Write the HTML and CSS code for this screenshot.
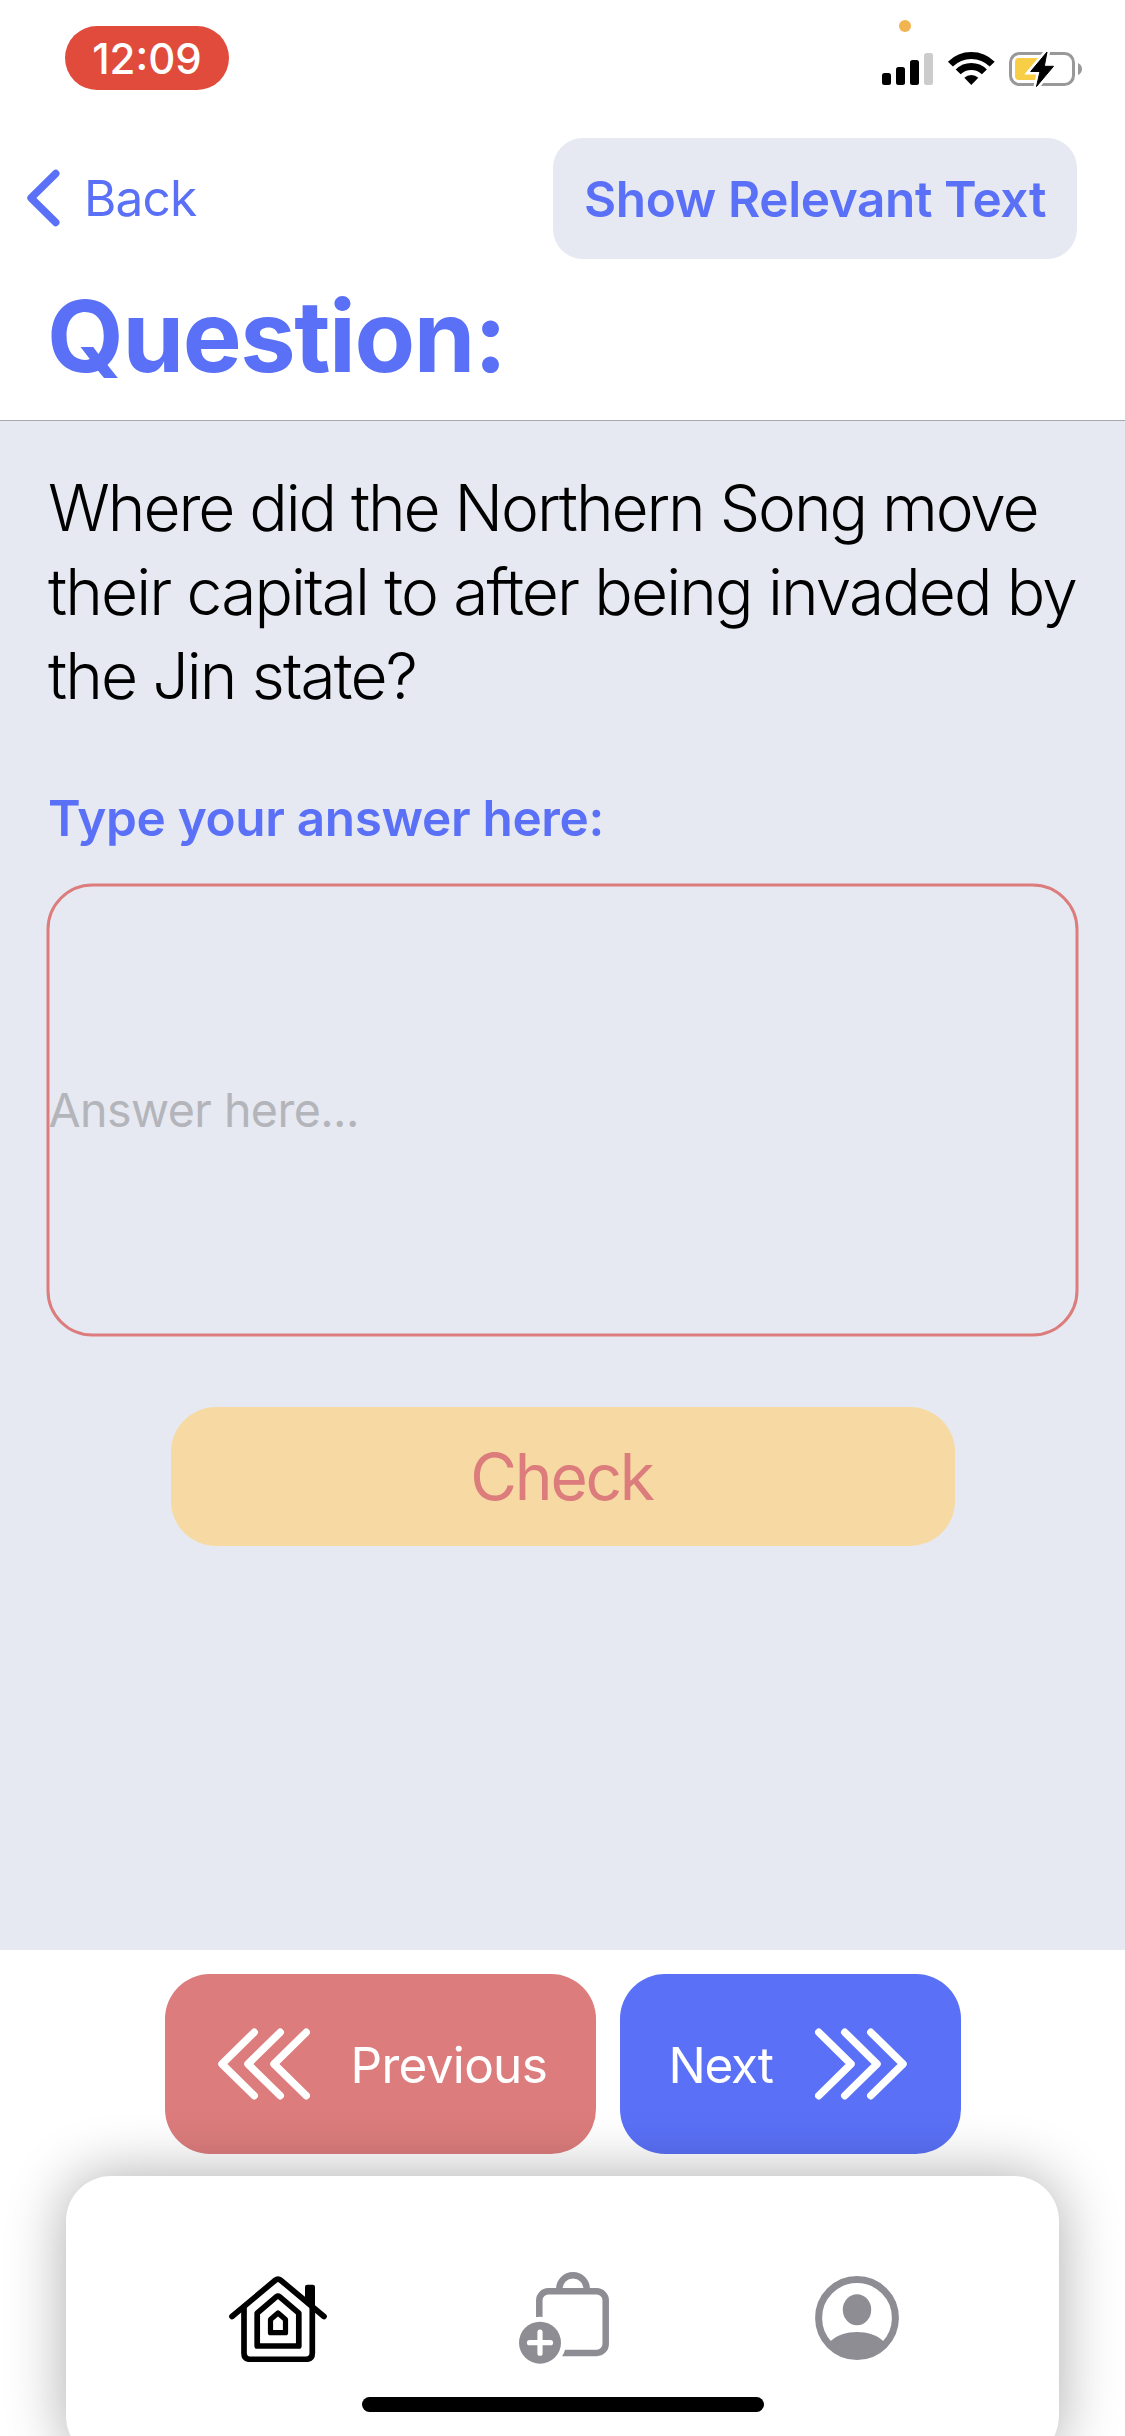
FILE: index.html
```
<!DOCTYPE html>
<html lang="en">
<head>
<meta charset="utf-8">
<title>Question</title>
<link rel="stylesheet" href="styles.css">
</head>
<body>
<div class="screen">
  <header class="header">
    <div class="status">
      <span class="clock"><span class="clock-text">12:09</span></span>
      <svg class="status-icons" width="202" height="70" viewBox="881 18 202 70">
        <circle cx="905" cy="26" r="6" fill="#f2b450"/>
        <rect x="882" y="73" width="9" height="12" rx="2.5"/>
        <rect x="896" y="67" width="9" height="18" rx="2.5"/>
        <rect x="910" y="60" width="9" height="25" rx="2.5"/>
        <rect x="924" y="53" width="9" height="32" rx="2.5" fill="#ccc"/>
        <g fill="none" stroke="#000" stroke-width="7">
          <path d="M950.4 64.1a29.5 29.5 0 0 1 41.8 0"/>
          <path d="M958.2 71.9a18.5 18.5 0 0 1 26.2 0"/>
        </g>
        <path d="M971.3 85l-7-7.2a10 10 0 0 1 14 0z"/>
        <rect x="1010.5" y="53.5" width="63" height="31" rx="9" fill="none" stroke="#999" stroke-width="3"/>
        <path d="M1078 63q4 2 4 6t-4 6z" fill="#999"/>
        <path d="M1019 58h20v22h-20q-4 0-4-4v-14q0-4 4-4z" fill="#f7ce46"/>
        <path d="M1047 52l-16.3 19.5h9.3l-3.5 15 17-20.2h-9.2z" fill="#fff" stroke="#fff" stroke-width="6"/>
        <path d="M1047 52l-16.3 19.5h9.3l-3.5 15 17-20.2h-9.2z" stroke="#000" stroke-linejoin="round"/>
      </svg>
    </div>
    <nav class="nav">
      <a class="back">
        <svg width="34" height="58" viewBox="0 0 34 58" fill="none" stroke="currentColor" stroke-width="7.4" stroke-linecap="round" stroke-linejoin="round"><path d="M29.8 4.5L5 29 29.8 53.5"/></svg>
        <span class="back-text">Back</span>
      </a>
      <button class="relevant">Show Relevant Text</button>
    </nav>
    <h1 class="title">Question:</h1>
  </header>
  <main class="main">
    <p class="question"><span class="line-first">Where did the Northern Song move</span><br>their capital to after being invaded by<br>the Jin state?</p>
    <div class="label">Type your answer here:</div>
    <div class="answer"><span class="placeholder">Answer here...</span></div>
    <button class="check">Check</button>
  </main>
  <footer class="footer">
    <div class="pager">
      <button class="step previous">
        <svg width="92" height="72" viewBox="0 0 92 72" class="arrows"><path d="M36.2 4.3L4 36l32.2 31.7M62.2 4.3L30 36l32.2 31.7M88.2 4.3L56 36l32.2 31.7"/></svg>
        <span class="step-text previous-text">Previous</span>
      </button>
      <button class="step next">
        <span class="step-text next-text">Next</span>
        <svg width="92" height="72" viewBox="0 0 92 72" class="arrows"><path d="M3.8 4.3L36 36 3.8 67.7M29.8 4.3L62 36 29.8 67.7M55.8 4.3L88 36 55.8 67.7"/></svg>
      </button>
    </div>
    <div class="tabs">
      <svg class="home" width="98" height="86" viewBox="0 0 98 86" fill="none" stroke="#000" stroke-width="5.7" stroke-linecap="round" stroke-linejoin="round">
        <path d="M3 40.5L46.3 4.2Q49 2 51.7 4.2L95 40.5"/>
        <path d="M15 31v46q0 6.3 6 6.3h56q6.3 0 6.3-6.3V31"/>
        <path d="M76 27.5V11q0-2.3 2.3-2.3h5.4q2.3 0 2.3 2.3V36z" fill="#000" stroke="none"/>
        <path d="M28.2 37.2L47.5 20.7Q49 19.5 50.5 20.7L69.8 37.2V70H28.2z"/>
        <path d="M41.5 43.5L49 37l7.5 6.5V56.7h-15z" stroke-width="5.2"/>
      </svg>
      <svg class="bag" width="91" height="92" viewBox="0 0 91 92" fill="none" stroke="#8e8d93" stroke-width="6.5">
        <rect x="20.3" y="19.3" width="66.4" height="61.6" rx="9"/>
        <path d="M40.3 18v-1a13.7 13.7 0 0 1 27.4 0v1"/>
        <circle cx="21" cy="70.7" r="26" fill="#fff" stroke="none"/>
        <circle cx="21" cy="70.7" r="21" fill="#8e8d93" stroke="none"/>
        <path d="M21 60.2v21M10.5 70.7h21" stroke="#fff" stroke-width="5.2" stroke-linecap="round"/>
      </svg>
      <svg class="person" width="84" height="84" viewBox="0 0 84 84" fill="#8e8d93">
        <circle cx="42" cy="42" r="38.4" fill="none" stroke="#8e8d93" stroke-width="7"/>
        <ellipse cx="42" cy="33.7" rx="14.2" ry="15.5"/>
        <path d="M15.7 65C22 59 32 56 42 56s20 3 26.3 9L66 72Q55 81 42 81T18 72z"/>
      </svg>
      <div class="indicator"></div>
    </div>
  </footer>
</div>
</body>
</html>
```
FILE: styles.css
```
* { box-sizing: border-box; margin: 0; padding: 0; }
body { width: 1125px; height: 2436px; background: #fff; font-family: Inter, "Liberation Sans", sans-serif; overflow: hidden; }
button { border: 0; font: inherit; color: inherit; }
svg { display: block; flex: none; }
.screen { display: flex; flex-direction: column; width: 1125px; height: 2436px; overflow: hidden; }
.header { height: 421px; border-bottom: 1px solid #a8a7ad; color: #5a70f6; }
.status { height: 138px; padding: 18px 42px 0 65px; display: flex; justify-content: space-between; align-items: flex-start; }
.clock { display: flex; align-items: center; justify-content: center; width: 164px; height: 64px; margin-top: 8px; border-radius: 32px; background: #e04b3c; color: #fff; }
.clock-text { font-size: 42px; font-weight: 500; }
.nav { height: 121px; padding: 0 48px 0 26px; display: flex; justify-content: space-between; align-items: center; }
.back { display: flex; align-items: center; gap: 24px; padding-bottom: 1px; font-size: 49.5px; white-space: nowrap; }
.back-text { letter-spacing: -0.8px; }
.relevant { width: 524px; height: 121px; border-radius: 30px; background: #e6e9f1; font-size: 49.5px; font-weight: 600; letter-spacing: -0.38px; white-space: nowrap; }
.title { padding-left: 47px; font-size: 99px; line-height: 154px; font-weight: 700; letter-spacing: -1.42px; }
.main { flex: none; height: 1529px; padding: 45px 46px 0; background: #e6e9f1; }
.question { padding-left: 2px; font-size: 64px; line-height: 84px; font-weight: 300; letter-spacing: -1.87px; white-space: nowrap; }
.line-first { letter-spacing: -2.07px; }
.label { margin-top: 70px; padding-left: 2px; font-size: 49.5px; line-height: 60px; font-weight: 600; letter-spacing: -0.34px; color: #5a70f6; }
.answer { display: flex; align-items: center; width: 1032px; height: 453px; margin-top: 35px; border: 3px solid #dc7c7c; border-radius: 46px; transform: translate(0.5px, 0.5px); }
.placeholder { margin-left: -1px; padding-bottom: 2px; font-size: 46.6px; letter-spacing: -0.57px; color: #b4b5bb; white-space: nowrap; }
.check { display: block; width: 784px; height: 139px; margin: 71px auto 0; padding-right: 2px; border-radius: 45px; background: #f7daa3; color: #dc7c7c; font-size: 64px; letter-spacing: -2.2px; }
.footer { flex: none; height: 486px; padding-top: 24px; }
.pager { display: flex; justify-content: center; gap: 24px; }
.step { display: flex; align-items: center; height: 180px; border-radius: 45px; color: #fff; font-size: 49.5px; white-space: nowrap; }
.step-text { padding-top: 2px; }
.previous { width: 431px; padding-left: 53px; gap: 41px; background: #dc7c7c; }
.previous-text { letter-spacing: -0.7px; }
.next { width: 341px; padding: 0 54px 0 49px; justify-content: space-between; background: #5a70f6; }
.next-text { letter-spacing: -1.3px; }
.arrows { fill: none; stroke: #fff; stroke-width: 7.5px; stroke-linecap: round; stroke-linejoin: round; }
.tabs { position: relative; display: flex; align-items: flex-start; height: 285px; margin: 22px 66px 0; padding: 96px 160px 0 163px; border-radius: 45px; background: #fff; box-shadow: 0 0 60px rgba(0, 0, 0, 0.33); }
.home, .person { margin-top: 4px; }
.bag { margin-left: 192px; }
.person { margin-left: 205px; }
.indicator { position: absolute; left: 296px; top: 221px; width: 402px; height: 15px; border-radius: 7.5px; background: #000; }
```
